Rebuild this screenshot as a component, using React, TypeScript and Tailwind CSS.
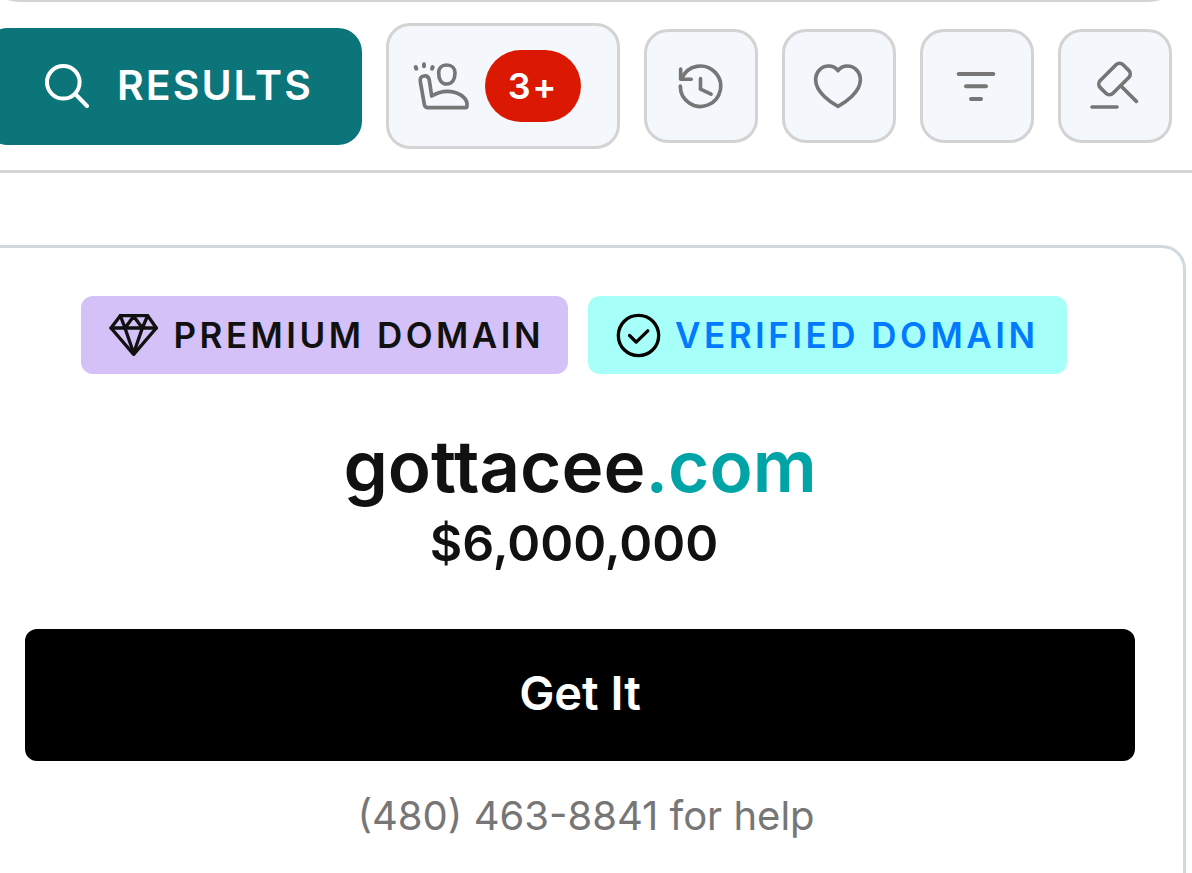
import React from 'react';

const iconProps = {
  fill: 'none',
  stroke: 'currentColor',
  strokeLinecap: 'round' as const,
  strokeLinejoin: 'round' as const,
  'aria-hidden': true,
};

const SearchIcon = () => (
  <svg {...iconProps} viewBox="0 0 44 44" className="size-11 shrink-0" strokeWidth="4">
    <circle cx="18.3" cy="18.3" r="16.3" />
    <path d="M30.3 30L42 42" />
  </svg>
);

const HandRaiseIcon = () => (
  <svg {...iconProps} viewBox="100 140 168 150" className="w-14 shrink-0" strokeWidth="11">
    <path d="M201 152c-16 0-24 10-24 23 0 19 7 34 24 34s25-15 25-34c0-13-9-23-25-23z" />
    <path d="M156 245L149 198C147 187 141 184 133 185C124 186 120 193 122 202L134 270Q136 280 145 280H257Q262 280 262 274V268C260 247 232 231 203 231C184 231 168 238 156 245Z" />
    <path d="M108 158l2 5M133 150v6M159 158l-2 5" strokeWidth="12" />
  </svg>
);

const HistoryIcon = () => (
  <svg {...iconProps} viewBox="112 130 136 136" className="size-[45px]" strokeWidth="11">
    <path d="M119 197A61 61 0 1 0 124 173" />
    <path d="M120 145V176H152" />
    <path d="M180 174V206L212 221" />
  </svg>
);

const HeartIcon = () => (
  <svg {...iconProps} viewBox="519 128 150 140" className="w-[50px]" strokeWidth="11">
    <path d="M594 258C572 247 527 215 527 179C527 154 545 137 566 137C580 137 589 144 594 151C599 144 608 137 622 137C643 137 661 154 661 179C661 215 616 247 594 258Z" />
  </svg>
);

const FilterIcon = () => (
  <svg {...iconProps} viewBox="138 211 120 93" className="w-10" strokeWidth="12">
    <path d="M146 220H250M168 257H228M183 295H213" />
  </svg>
);

const GavelIcon = () => (
  <svg {...iconProps} viewBox="541 182 150 153" className="w-[50px] overflow-visible" strokeWidth="11">
    <rect x="569" y="209" width="97" height="54" rx="15" transform="rotate(-45 617.5 236)" />
    <path d="M637 257L683 303M550 320H625" />
  </svg>
);

const DiamondIcon = () => (
  <svg {...iconProps} viewBox="115 84 150 138" className="w-[50px] text-[#111]" strokeWidth="10">
    <path d="M149 95H231L257 132L189 211L121 132Z" />
    <path d="M121 132H257M149 95L163 132L189 97L215 132L231 95" />
    <path d="M163 132L189 208L215 132" />
  </svg>
);

const CheckCircleIcon = () => (
  <svg {...iconProps} viewBox="133 82 136 136" className="size-[45px] text-black" strokeWidth="10">
    <circle cx="201" cy="150" r="61" />
    <path d="M174 150L194 170L229 136" />
  </svg>
);

const TOOLS = [
  { label: 'History', icon: HistoryIcon },
  { label: 'Favorites', icon: HeartIcon },
  { label: 'Filters', icon: FilterIcon },
  { label: 'Auctions', icon: GavelIcon },
];

const App: React.FC = () => {
  return (
    <div className="flex flex-col h-screen overflow-hidden bg-white font-['Inter',sans-serif] text-[#111]">
      <header className="border-b-3 border-[#d5d5d5] pb-[21px]">
        <div className="h-20 -mt-[78px] -ml-5 mr-1 rounded-[40px] border-3 border-[#d3d3d3]"></div>
        <div className="flex items-center gap-6 pr-5 pt-[21px]">
          <button className="flex flex-1 items-center gap-7 -ml-4 h-[117px] pl-[61px] rounded-3xl bg-[#0b757a] text-white text-[41px] font-semibold tracking-wider">
            <SearchIcon />
            RESULTS
          </button>
          <button
            aria-label="Participants"
            className="flex items-center gap-4 h-[126px] pl-6 pr-9 rounded-3xl border-3 border-[#d3d3d3] bg-[#f4f7fc] text-[#767676]"
          >
            <HandRaiseIcon />
            <span className="flex items-center justify-center w-24 h-[72px] rounded-full bg-[#db1802] text-white text-4xl font-semibold tracking-wider">
              3+
            </span>
          </button>
          {TOOLS.map(({ label, icon: Icon }) => (
            <button
              key={label}
              aria-label={label}
              className="flex items-center justify-center size-[114px] pr-0.5 rounded-3xl border-3 border-[#d3d3d3] bg-[#f4f7fc] text-[#767676]"
            >
              <Icon />
            </button>
          ))}
        </div>
      </header>

      <main className="flex flex-1 flex-col pt-[72px] pr-1.5">
        <section className="flex-1 flex flex-col items-center pt-12 pl-[25px] pr-12 rounded-tr-3xl border-t-3 border-r-3 border-[#d1d9e0] text-center">
          <div className="flex gap-5 pr-3 whitespace-nowrap text-[35px] font-semibold tracking-widest">
            <span className="flex items-center gap-3.5 h-[78px] pl-7 pr-6 rounded-xl bg-[#d4c1f7]">
              <DiamondIcon />
              PREMIUM DOMAIN
            </span>
            <span className="flex items-center gap-3.5 h-[78px] px-7 rounded-xl bg-[#a6fff8] text-[#007aff]">
              <CheckCircleIcon />
              VERIFIED DOMAIN
            </span>
          </div>

          <h1 className="mt-12 text-[71px] leading-[88px] font-semibold">
            gottacee<span className="text-[#00a4a6]">.com</span>
          </h1>
          <p className="pr-3 text-[50px] leading-[66px] font-semibold">$6,000,000</p>

          <button className="w-full h-[132px] mt-[53px] pb-1 rounded-xl bg-black text-white text-[47px] font-semibold">
            Get It
          </button>
          <p className="pl-3 mt-6 text-[40px] leading-[62px] text-[#767676]">(480) 463-8841 for help</p>
        </section>
      </main>
    </div>
  );
};

export default App;
